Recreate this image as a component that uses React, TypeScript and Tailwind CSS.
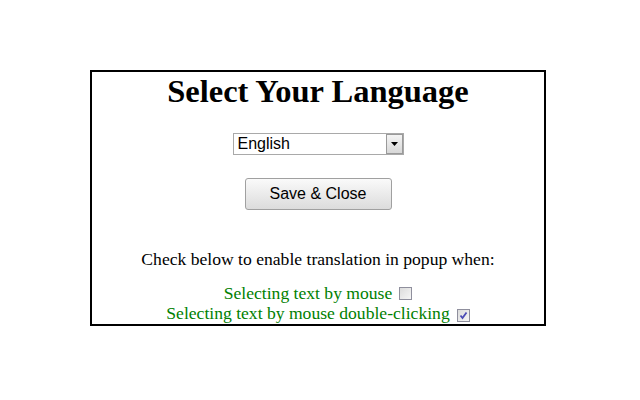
import React from 'react';

function Checkbox({ checked }: { checked?: boolean }) {
  return (
    <span className="ml-[7px] inline-flex h-[13px] w-[13px] items-center justify-center border border-[#8f8f9d] bg-gradient-to-br from-[#dcdcdc] to-[#f6f6f6] align-[-1px]">
      {checked && (
        <svg width="9" height="9" viewBox="0 0 9 9">
          <path d="M1.5 4.5 L3.5 7 L7.5 1.5" fill="none" stroke="#4b4bb5" strokeWidth="1.8" />
        </svg>
      )}
    </span>
  );
}

export default function App() {
  return (
    <div className="h-[400px] w-[640px] bg-white pt-[70px]">
      <div className="ml-[90px] flex h-[256px] w-[456px] flex-col items-center border-2 border-black">
        <h1 className="m-0 mt-[1px] text-[32.5px] leading-[37px] font-bold text-black [font-family:'Liberation_Serif',serif]">
          Select Your Language
        </h1>

        <div className="mt-[23px] flex h-[22px] w-[171px] items-stretch border border-[#a9a9a9] bg-white [font-family:'Liberation_Sans',sans-serif]">
          <span className="flex-1 pl-[4px] text-[16px] leading-[20px] text-black">English</span>
          <span className="flex w-[17px] items-center justify-center border border-[#9a9a9a] bg-gradient-to-b from-[#f4f4f4] to-[#d8d8d8]">
            <svg width="7" height="4" viewBox="0 0 7 4">
              <path d="M0 0 H7 L3.5 4 Z" fill="#000" />
            </svg>
          </span>
        </div>

        <button className="mt-[23px] h-[32px] w-[147px] rounded-[3px] border border-[#a0a0a0] bg-gradient-to-b from-[#fafafa] to-[#dcdcdc] text-[16px] text-black [font-family:'Liberation_Sans',sans-serif]">
          Save &amp; Close
        </button>

        <p className="mt-[39px] text-[17.6px] leading-[20px] text-black [font-family:'Liberation_Serif',serif]">
          Check below to enable translation in popup when:
        </p>

        <div className="mt-[14px] flex flex-col items-center text-[17.6px] leading-[20px] text-[#008000] [font-family:'Liberation_Serif',serif]">
          <label>
            Selecting text by mouse
            <Checkbox />
          </label>
          <label>
            Selecting text by mouse double-clicking
            <Checkbox checked />
          </label>
        </div>
      </div>
    </div>
  );
}
